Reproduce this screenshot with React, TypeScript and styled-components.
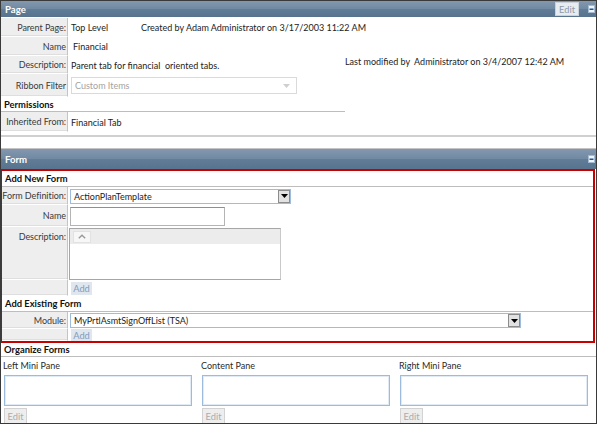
import styled, { createGlobalStyle } from "styled-components";

const GlobalStyle = createGlobalStyle`
  html, body {
    margin: 0;
    padding: 0;
    background: #fff;
  }
  body {
    font-family: Lato, "Liberation Sans", sans-serif;
    font-size: 9px;
    color: #222;
  }
  * {
    box-sizing: border-box;
  }
`;

const Frame = styled.div`
  width: 597px;
  height: 424px;
  border: 1px solid #3a3a3a;
  overflow: hidden;
  background: #fff;
  display: flex;
  flex-direction: column;
`;

const Bar = styled.div<{ $h: number; $line?: boolean }>`
  flex: none;
  height: ${({ $h }) => $h}px;
  display: flex;
  align-items: center;
  justify-content: space-between;
  padding: 0 1px 0 4px;
  color: #fff;
  font-weight: bold;
  font-size: 9.6px;
  background: linear-gradient(#8398af, #7089a3 50%, #617c97 52%, #58738e);
  border-top: ${({ $line }) => ($line ? "1px solid #c4c4c4" : "0")};
`;

const BarTools = styled.div`
  display: flex;
  align-items: center;
  gap: 9px;
`;

const BarEdit = styled.span`
  width: 24px;
  height: 14px;
  display: flex;
  align-items: center;
  justify-content: center;
  background: #e7ecf0;
  border: 1px solid #c9d2db;
  color: #8d9aa8;
  font-weight: normal;
  font-size: 9.3px;
`;

const PageGrid = styled.div`
  display: grid;
  grid-template-columns: 67px 73px 204px 1fr;
  grid-template-rows: 19px 19px 18px 23px 15px 20px;
  margin-top: 1px;
  flex: none;
`;

const Label = styled.div<{ $top?: boolean; $row?: string }>`
  grid-column: 1;
  grid-row: ${({ $row }) => $row ?? "auto"};
  background: #eeeeee;
  border-right: 1px solid #c4c4c4;
  border-bottom: 1px solid #fff;
  box-shadow: inset 0 -1px 0 #dedede;
  display: flex;
  justify-content: flex-end;
  align-items: ${({ $top }) => ($top ? "flex-start" : "center")};
  padding: ${({ $top }) => ($top ? "4px 1px 0 0" : "0 1px 0 0")};
  color: #3a3a3a;
  letter-spacing: -0.05px;
  white-space: nowrap;
`;

const Value = styled.div<{ $row: string; $span?: string; $pad?: number }>`
  grid-row: ${({ $row }) => $row};
  grid-column: ${({ $span }) => $span ?? "2"};
  display: flex;
  align-items: center;
  padding-left: ${({ $pad }) => $pad ?? 3}px;
  white-space: nowrap;
  color: #222;
`;

const Meta = styled.div<{ $row: string; $col: string; $offset?: number }>`
  grid-row: ${({ $row }) => $row};
  grid-column: ${({ $col }) => $col};
  align-self: center;
  margin-top: ${({ $offset }) => $offset ?? 0}px;
  white-space: nowrap;
  color: #222;
`;

const Heading = styled.div<{ $span?: string; $row?: string; $h?: number }>`
  grid-column: ${({ $span }) => $span ?? "auto"};
  grid-row: ${({ $row }) => $row ?? "auto"};
  height: ${({ $h }) => ($h ? `${$h}px` : "auto")};
  display: flex;
  align-items: center;
  padding-left: 3px;
  font-weight: bold;
  font-size: 9.4px;
  color: #111;
  border-bottom: 1px solid #bdbdbd;
  flex: none;
`;

const Divider = styled.div`
  flex: none;
  margin-top: 3px;
  height: 2px;
  background: #d0d0d0;
`;

const Gap = styled.div<{ $h: number }>`
  flex: none;
  height: ${({ $h }) => $h}px;
`;

const Highlight = styled.div`
  flex: none;
  margin: 0 1px 0 -1px;
  border: 2px solid #c80000;
  height: 174px;
  display: flex;
  flex-direction: column;
  overflow: hidden;
`;

const FormGrid = styled.div<{ $rows: string }>`
  display: grid;
  grid-template-columns: 66px 1fr;
  grid-template-rows: ${({ $rows }) => $rows};
  flex: none;
`;

const Field = styled.div<{ $top?: boolean }>`
  display: flex;
  align-items: ${({ $top }) => ($top ? "flex-start" : "center")};
  padding-left: 2px;
`;

const Dropdown = styled.div<{ $w: number; $h?: number; $disabled?: boolean }>`
  width: ${({ $w }) => $w}px;
  height: ${({ $h }) => $h ?? 15}px;
  display: flex;
  align-items: center;
  padding-left: 3px;
  background: #fff;
  border: 1px solid ${({ $disabled }) => ($disabled ? "#dadada" : "#9ebcdc")};
  color: ${({ $disabled }) => ($disabled ? "#a3a3a3" : "#1c1c1c")};
  white-space: nowrap;
`;

const DropText = styled.span`
  flex: 1;
`;

const ArrowBox = styled.span<{ $plain?: boolean }>`
  width: 12px;
  height: ${({ $plain }) => ($plain ? "100%" : "13px")};
  display: flex;
  align-items: center;
  justify-content: center;
  background: ${({ $plain }) => ($plain ? "transparent" : "#e2e2e2")};
  border: ${({ $plain }) => ($plain ? "0" : "1px solid #8c8c8c")};
  margin-right: ${({ $plain }) => ($plain ? "4px" : "0")};
`;

const TextInput = styled.input`
  width: 155px;
  height: 19px;
  border: 1px solid #b4b4b4;
  border-top-color: #8f8f8f;
  background: #fff;
  font: inherit;
  padding: 0 3px;
  outline: none;
`;

const Editor = styled.div`
  width: 212px;
  height: 52px;
  margin-left: -1px;
  margin-top: 1px;
  border: 1px solid #a6a6a6;
  border-right-color: #c9c9c9;
  background: #fff;
  display: flex;
  flex-direction: column;
`;

const EditorTools = styled.div`
  height: 15px;
  background: #ececec;
  display: flex;
  align-items: center;
  padding-left: 3px;
`;

const ToolButton = styled.span`
  width: 18px;
  height: 12px;
  display: flex;
  align-items: center;
  justify-content: center;
  background: #f7f7f7;
  border: 1px solid #e2e2e2;
`;

const AddButton = styled.span`
  width: 21px;
  height: 13px;
  display: flex;
  align-items: center;
  justify-content: center;
  background: #dfe6ee;
  color: #7f9cbc;
  font-size: 9.3px;
  margin-left: 1px;
`;

const Panes = styled.div`
  display: grid;
  grid-template-columns: repeat(3, 188px);
  column-gap: 10px;
  padding-left: 3px;
`;

const Pane = styled.div`
  display: flex;
  flex-direction: column;
`;

const PaneTitle = styled.div`
  height: 17px;
  display: flex;
  align-items: center;
  color: #2a2a2a;
  margin-left: -1px;
`;

const PaneBox = styled.div`
  height: 31px;
  margin-top: 1px;
  border: 1px solid #9dbbdc;
  box-shadow: inset 0 0 0 1px #e1ebf5;
  background: #fff;
`;

const PaneEdit = styled.span`
  margin-top: 2px;
  width: 23px;
  height: 16px;
  display: flex;
  align-items: center;
  justify-content: center;
  background: #eeeeee;
  border: 1px solid #d2d2d2;
  color: #ababab;
  font-size: 9.3px;
`;

const Collapse = () => (
  <svg width="7" height="8" viewBox="0 0 7 8">
    <rect x="0.5" y="0.5" width="6" height="7" fill="#eef3f9" stroke="#a3bad3" />
    <rect x="1.5" y="3.5" width="4" height="1.5" fill="#24558e" />
  </svg>
);

const DownArrow = ({ color = "#000" }: { color?: string }) => (
  <svg width="7" height="4" viewBox="0 0 7 4">
    <path d="M0 0 H7 L3.5 4 Z" fill={color} />
  </svg>
);

const UpChevron = () => (
  <svg width="8" height="5" viewBox="0 0 8 5">
    <path d="M0.8 4.3 L4 1.2 L7.2 4.3" fill="none" stroke="#9a9a9a" strokeWidth="1.4" />
  </svg>
);

const panes = ["Left Mini Pane", "Content Pane", "Right Mini Pane"];

export default function App() {
  return (
    <>
      <GlobalStyle />
      <Frame>
        <Bar $h={16}>
          <span>Page</span>
          <BarTools>
            <BarEdit>Edit</BarEdit>
            <Collapse />
          </BarTools>
        </Bar>

        <PageGrid>
          <Label $row="1">Parent Page:</Label>
          <Value $row="1">Top Level</Value>
          <Meta $row="1" $col="3 / 5">
            Created by Adam Administrator on 3/17/2003 11:22 AM
          </Meta>

          <Label $row="2">Name</Label>
          <Value $row="2" $pad={5}>
            Financial
          </Value>
          <Meta $row="2 / 4" $col="4" $offset={11}>
            Last modified by&nbsp; Administrator on 3/4/2007 12:42 AM
          </Meta>

          <Label $row="3">Description:</Label>
          <Value $row="3" $span="2 / 4">
            Parent tab for financial&nbsp; oriented tabs.
          </Value>

          <Label $row="4">Ribbon Filter</Label>
          <Value $row="4" $span="2 / 5">
            <Dropdown $w={226} $h={17} $disabled>
              <DropText>Custom Items</DropText>
              <ArrowBox $plain>
                <DownArrow color="#cfcfcf" />
              </ArrowBox>
            </Dropdown>
          </Value>

          <Heading $row="5" $span="1 / 4">
            Permissions
          </Heading>

          <Label $row="6">Inherited From:</Label>
          <Value $row="6">Financial Tab</Value>
        </PageGrid>

        <Divider />
        <Gap $h={11} />

        <Bar $h={21} $line>
          <span>Form</span>
          <Collapse />
        </Bar>

        <Highlight>
          <Heading $h={16}>Add New Form</Heading>
          <FormGrid $rows="18px 22px 53px 16px">
            <Label>Form Definition:</Label>
            <Field>
              <Dropdown $w={221}>
                <DropText>ActionPlanTemplate</DropText>
                <ArrowBox>
                  <DownArrow />
                </ArrowBox>
              </Dropdown>
            </Field>

            <Label>Name</Label>
            <Field>
              <TextInput />
            </Field>

            <Label $top>Description:</Label>
            <Field $top>
              <Editor>
                <EditorTools>
                  <ToolButton>
                    <UpChevron />
                  </ToolButton>
                </EditorTools>
              </Editor>
            </Field>

            <Label />
            <Field>
              <AddButton>Add</AddButton>
            </Field>
          </FormGrid>

          <Heading $h={16}>Add Existing Form</Heading>
          <FormGrid $rows="17px 12px">
            <Label>Module:</Label>
            <Field>
              <Dropdown $w={451}>
                <DropText>MyPrtlAsmtSignOffList (TSA)</DropText>
                <ArrowBox>
                  <DownArrow />
                </ArrowBox>
              </Dropdown>
            </Field>

            <Label />
            <Field $top>
              <AddButton>Add</AddButton>
            </Field>
          </FormGrid>
        </Highlight>

        <Heading $h={14}>Organize Forms</Heading>
        <Panes>
          {panes.map((p) => (
            <Pane key={p}>
              <PaneTitle>{p}</PaneTitle>
              <PaneBox />
              <PaneEdit>Edit</PaneEdit>
            </Pane>
          ))}
        </Panes>
      </Frame>
    </>
  );
}
